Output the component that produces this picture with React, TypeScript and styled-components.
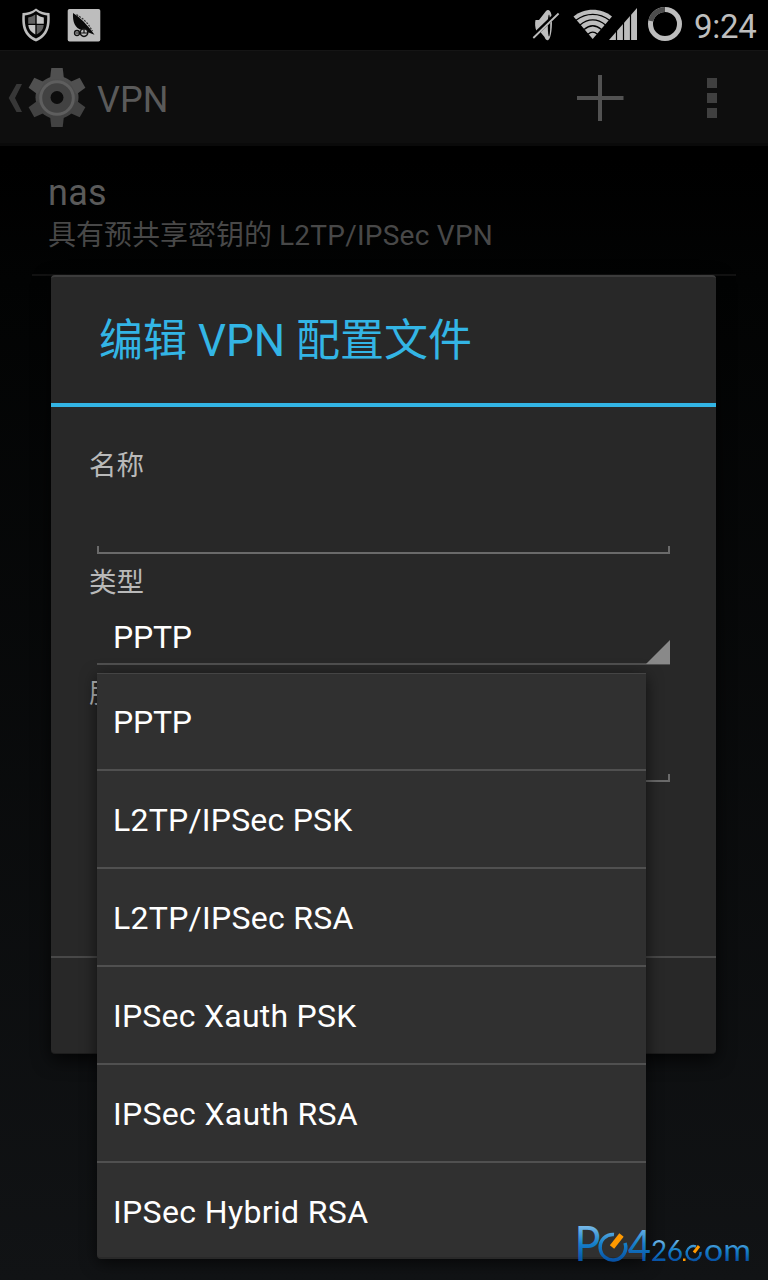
import React from 'react';
import styled, { createGlobalStyle } from 'styled-components';

const Global = createGlobalStyle`
  * { box-sizing: border-box; }
  html, body { margin: 0; padding: 0; background: #000; }
  body { font-family: Roboto, "Noto Sans CJK SC", sans-serif; overflow: hidden; }
`;

const Screen = styled.div`
  position: relative;
  width: 768px;
  height: 1280px;
  overflow: hidden;
  display: flex;
  flex-direction: column;
  background: linear-gradient(#000 0, #000 160px, #020303 280px, #111315 1280px);
`;

const StatusBar = styled.header`
  display: flex;
  justify-content: space-between;
  height: 50px;
  background: #000;
`;

const StatusGroup = styled.div`
  display: flex;
  align-items: flex-start;
`;

const Clock = styled.span`
  width: 78px;
  padding: 7px 0 0 4px;
  color: #bebebe;
  font-size: 33px;
  line-height: 40px;
  letter-spacing: -0.3px;
`;

const ActionBar = styled.nav`
  display: flex;
  align-items: center;
  height: 96px;
  background: #0e0e0e;
  border-top: 1px solid #151515;
  border-bottom: 3px solid #0a0a0a;
`;

const BarTitle = styled.h1`
  flex: 1;
  margin: 5px 0 0 6px;
  color: #5a5a5a;
  font-weight: 400;
  font-size: 36px;
  line-height: 42px;
`;

const VpnEntry = styled.section`
  height: 130px;
  margin: 0 32px;
  padding: 26px 16px 0;
  border-bottom: 2px solid #121212;
`;

const EntryName = styled.div`
  color: #5a5a5a;
  font-size: 36px;
  line-height: 42px;
  letter-spacing: 0.3px;
`;

const EntryType = styled.div`
  margin-top: 1px;
  color: #484848;
  font-size: 28px;
  line-height: 42px;
  white-space: nowrap;
`;

const Protocol = styled.span`
  letter-spacing: 0.25px;
`;

const Dialog = styled.div`
  position: absolute;
  left: 51px;
  top: 275px;
  width: 665px;
  height: 779px;
  display: flex;
  flex-direction: column;
  background: #282828;
  border-top: 2px solid #3c3c3c;
  border-bottom: 1px solid #1d1d1d;
  border-radius: 4px;
  box-shadow: 0 6px 18px rgba(0, 0, 0, 0.75);
`;

const DialogTitle = styled.h2`
  height: 130px;
  margin: 0;
  padding: 33px 0 0 48px;
  border-bottom: 4px solid #33b5e5;
  color: #33b5e5;
  font-weight: 400;
  font-size: 44px;
  line-height: 62px;
`;

const Form = styled.div`
  flex: 1;
  padding: 38px 46px 0 38px;
`;

const Label = styled.div`
  height: 40px;
  padding-top: 1px;
  color: #b9b9b9;
  font-size: 27.5px;
  line-height: 40px;
`;

const EditLine = styled.div`
  height: 8px;
  margin: 61px 0 8px 8px;
  border: 2px solid #6a6a6a;
  border-top: 0;
`;

const Spinner = styled.div`
  display: flex;
  justify-content: space-between;
  align-items: flex-end;
  height: 63px;
  margin: 0 0 8px 8px;
  padding-left: 16px;
  border-bottom: 2px solid #505050;
  color: #fff;
  font-size: 32px;
`;

const SpinnerValue = styled.span`
  line-height: 38px;
  margin-bottom: 7px;
  letter-spacing: -0.2px;
`;

const SpinnerArrow = styled.svg`
  margin-bottom: -1px;
`;

const ButtonBar = styled.div`
  height: 97px;
  border-top: 2px solid #484848;
`;

const Menu = styled.ul`
  position: absolute;
  left: 97px;
  top: 673px;
  width: 549px;
  height: 586px;
  margin: 0;
  padding: 0;
  list-style: none;
  background: #303030;
  border-top: 1px solid #444;
  border-bottom: 2px solid #292929;
  border-radius: 0 0 4px 4px;
  box-shadow: 0 4px 16px rgba(0, 0, 0, 0.65);
`;

const MenuItem = styled.li<{ $tracking: number }>`
  height: 98px;
  padding: 0 16px;
  color: #fff;
  font-size: 32px;
  line-height: 98px;
  letter-spacing: ${(p) => p.$tracking}px;
  border-bottom: 2px solid #505050;
  &:first-child { height: 97px; line-height: 96px; }
  &:last-child { border-bottom: 0; height: 96px; }
`;

const Watermark = styled.svg`
  position: absolute;
  left: 560px;
  top: 1200px;
`;

const options = [
  { name: 'PPTP', tracking: -0.2 },
  { name: 'L2TP/IPSec PSK', tracking: 0.22 },
  { name: 'L2TP/IPSec RSA', tracking: 0.28 },
  { name: 'IPSec Xauth PSK', tracking: 0.24 },
  { name: 'IPSec Xauth RSA', tracking: 0.31 },
  { name: 'IPSec Hybrid RSA', tracking: 0.36 },
];

const NoticeIcons = () => (
  <svg width="110" height="50">
    <path d="M36 8.5C31.5 12 27 13 22.500 13C21.500 26 23 36 36 41.500C49 36 50.500 26 49.500 13C45 13 40.500 12 36 8.500Z" fill="#bdbdbd" />
    <path d="M36 11C32 14 28.500 15.200 24.800 15.500C24.500 26 26 34 36 38.500C46 34 47.500 26 47.200 15.500C43.500 15.200 40 14 36 11Z" fill="#050505" />
    <path d="M35.300 14.500V23.700H28.200V17.500C31 17 33 16 35.300 14.500Z" fill="#636363" />
    <path d="M36.700 14.500V23.700H43.800V17.500C41 17 39 16 36.700 14.500Z" fill="#c4c4c4" />
    <path d="M35.300 25H28.300C28.700 29.500 31 32 35.300 34.500Z" fill="#c4c4c4" />
    <path d="M36.700 25H43.700C43.300 29.500 41 32 36.700 34.500Z" fill="#636363" />
    <rect x="67.700" y="9" width="32.600" height="32.500" rx="1.800" fill="#bdbdbd" />
    <path d="M73 13C72.500 22 75 28.500 82 30L94.500 34.700L91 30L88 26.500L83.500 21.500L78 16.500Z" fill="#090909" />
    <path d="M76.500 14.500L83 19L88 24L92.500 31" fill="none" stroke="#333" strokeWidth="1.200" strokeDasharray="2 1.200" />
    <circle cx="77" cy="33" r="2.500" fill="#bdbdbd" stroke="#111" strokeWidth="1.300" />
    <circle cx="84" cy="32.600" r="3.800" fill="#bdbdbd" stroke="#111" strokeWidth="1.500" />
    <path d="M75.500 33h12M84 29v4" stroke="#111" strokeWidth="1.200" />
  </svg>
);

const SystemIcons = () => (
  <svg width="170" height="50" viewBox="520 0 170 50">
    <path d="M535.500 20H539L546 11C548 9 550.500 10 551.500 15C552.500 21 552 34 549.500 38.500C548 41.500 546 40.500 544.500 37L539.500 31H536.500C535 28 534.800 23 535.500 20Z" fill="#bdbdbd" />
    <ellipse cx="549" cy="25.500" rx="1.200" ry="11" fill="#000" />
    <path d="M532 37.500L558 12.500" stroke="#000" strokeWidth="4.500" />
    <path d="M533.300 38L558.600 13.500" stroke="#bdbdbd" strokeWidth="1.800" />
    <path d="M592.700 39L573.500 16.500C584 7.500 601.500 7.500 612 16.500Z" fill="#bdbdbd" />
    <g fill="none" stroke="#000" strokeWidth="1.300">
      <path d="M576 20.300C586 12.300 599.500 12.300 609.500 20.300" />
      <path d="M580 25C588 18.300 597.500 18.300 605.500 25" />
      <path d="M584 29.600C589.500 24.800 596 24.800 601.500 29.600" />
      <path d="M588 34.300C591 31.500 594.500 31.500 597.500 34.300" />
    </g>
    <path d="M609 40L637 8V40Z" fill="#bdbdbd" />
    <path d="M616.500 7V40M623.500 7V40M630.500 7V40" stroke="#000" strokeWidth="1.200" />
    <circle cx="665" cy="24" r="14.500" fill="none" stroke="#bdbdbd" strokeWidth="5" />
    <path d="M650.800 21A14.500 14.500 0 0 1 665 9.500" fill="none" stroke="#4d4d4d" strokeWidth="5" />
  </svg>
);

const teeth = [0, 60, 120, 180, 240, 300];

const UpIcon = () => (
  <svg width="91" height="92" viewBox="0 51 91 92">
    <defs>
      <linearGradient id="gear" x1="0" y1="68" x2="0" y2="127" gradientUnits="userSpaceOnUse">
        <stop offset="0" stopColor="#525252" />
        <stop offset="1" stopColor="#3e3e3e" />
      </linearGradient>
      <mask id="gearHole" maskUnits="userSpaceOnUse" x="0" y="51" width="91" height="92">
        <rect x="0" y="51" width="91" height="92" fill="#fff" />
        <circle cx="57" cy="97.500" r="12" fill="#000" />
      </mask>
    </defs>
    <path d="M16.500 84H22L15 98L22 112H16.500L8.700 98Z" fill="#373737" />
    <path
      mask="url(#gearHole)"
      fill="url(#gear)"
      d={'M57 76a21.500 21.500 0 1 0 .01 0Z'}
    />
    {teeth.map((a) => (
      <path key={a} d="M51.300 68H62.700L64 79H50Z" fill={a > 90 && a < 270 ? '#424242' : '#505050'} transform={`rotate(${a} 57 97.500)`} />
    ))}
    <circle cx="57" cy="98" r="16.300" fill="#424242" stroke="#5e5e5e" strokeWidth="3" />
    <circle cx="57" cy="97.500" r="6.500" fill="#0c0c0c" />
  </svg>
);

const ActionIcons = () => (
  <svg width="208" height="92" viewBox="560 51 208 92">
    <path d="M577 98H623.500M600 75V121" stroke="#525252" strokeWidth="4" />
    <path d="M707 78h10v10h-10zM707 93h10v10h-10zM707 108h10v10h-10z" fill="#404040" />
  </svg>
);

const App = () => (
  <>
    <Global />
    <Screen>
      <StatusBar>
        <StatusGroup><NoticeIcons /></StatusGroup>
        <StatusGroup><SystemIcons /><Clock>9:24</Clock></StatusGroup>
      </StatusBar>
      <ActionBar>
        <UpIcon />
        <BarTitle>VPN</BarTitle>
        <ActionIcons />
      </ActionBar>
      <VpnEntry>
        <EntryName>nas</EntryName>
        <EntryType>具有预共享密钥的 <Protocol>L2TP/IPSec VPN</Protocol></EntryType>
      </VpnEntry>
      <Dialog>
        <DialogTitle>编辑 VPN 配置文件</DialogTitle>
        <Form>
          <Label>名称</Label>
          <EditLine />
          <Label>类型</Label>
          <Spinner>
            <SpinnerValue>PPTP</SpinnerValue>
            <SpinnerArrow width="24" height="24"><path d="M0 24L24 0V24Z" fill="#898989" /></SpinnerArrow>
          </Spinner>
          <Label>服</Label>
          <EditLine />
        </Form>
        <ButtonBar />
      </Dialog>
      <Menu>
        {options.map((o) => <MenuItem key={o.name} $tracking={o.tracking}>{o.name}</MenuItem>)}
      </Menu>
      <Watermark width="208" height="80" viewBox="560 1200 208 80">
        <defs>
          <linearGradient id="big" x1="0" y1="1226" x2="0" y2="1261" gradientUnits="userSpaceOnUse">
            <stop offset="0" stopColor="#77b9e8" />
            <stop offset=".5" stopColor="#1680ca" />
            <stop offset="1" stopColor="#0751a5" />
          </linearGradient>
          <linearGradient id="small" x1="0" y1="1240" x2="0" y2="1261" gradientUnits="userSpaceOnUse">
            <stop offset="0" stopColor="#72b5e5" />
            <stop offset=".5" stopColor="#1680ca" />
            <stop offset="1" stopColor="#0751a5" />
          </linearGradient>
        </defs>
        <g fontFamily="Lato" fill="url(#big)">
          <text x="574.500" y="1261" fontSize="48" textLength="26" lengthAdjust="spacingAndGlyphs">P</text>
          <text x="628" y="1261" fontSize="42" textLength="23" lengthAdjust="spacingAndGlyphs">4</text>
        </g>
        <g fontFamily="Lato" fill="url(#small)">
          <text x="651" y="1261" fontSize="29" textLength="32" lengthAdjust="spacingAndGlyphs">26</text>
          <text x="704" y="1261" fontSize="30" textLength="47" lengthAdjust="spacingAndGlyphs">om</text>
        </g>
        <path d="M614 1234.500A12.800 12.800 0 1 0 625 1243" fill="none" stroke="url(#big)" strokeWidth="3.500" />
        <path d="M612 1247L621.500 1235" stroke="#f90" strokeWidth="5.500" />
        <path d="M696 1246.500A7 7 0 1 0 700.500 1252" fill="none" stroke="url(#small)" strokeWidth="2.500" />
        <path d="M694 1252.500L699 1246" stroke="#f90" strokeWidth="3" />
        <rect x="683" y="1258.500" width="2.500" height="2.500" fill="#f90" />
      </Watermark>
    </Screen>
  </>
);

export default App;
